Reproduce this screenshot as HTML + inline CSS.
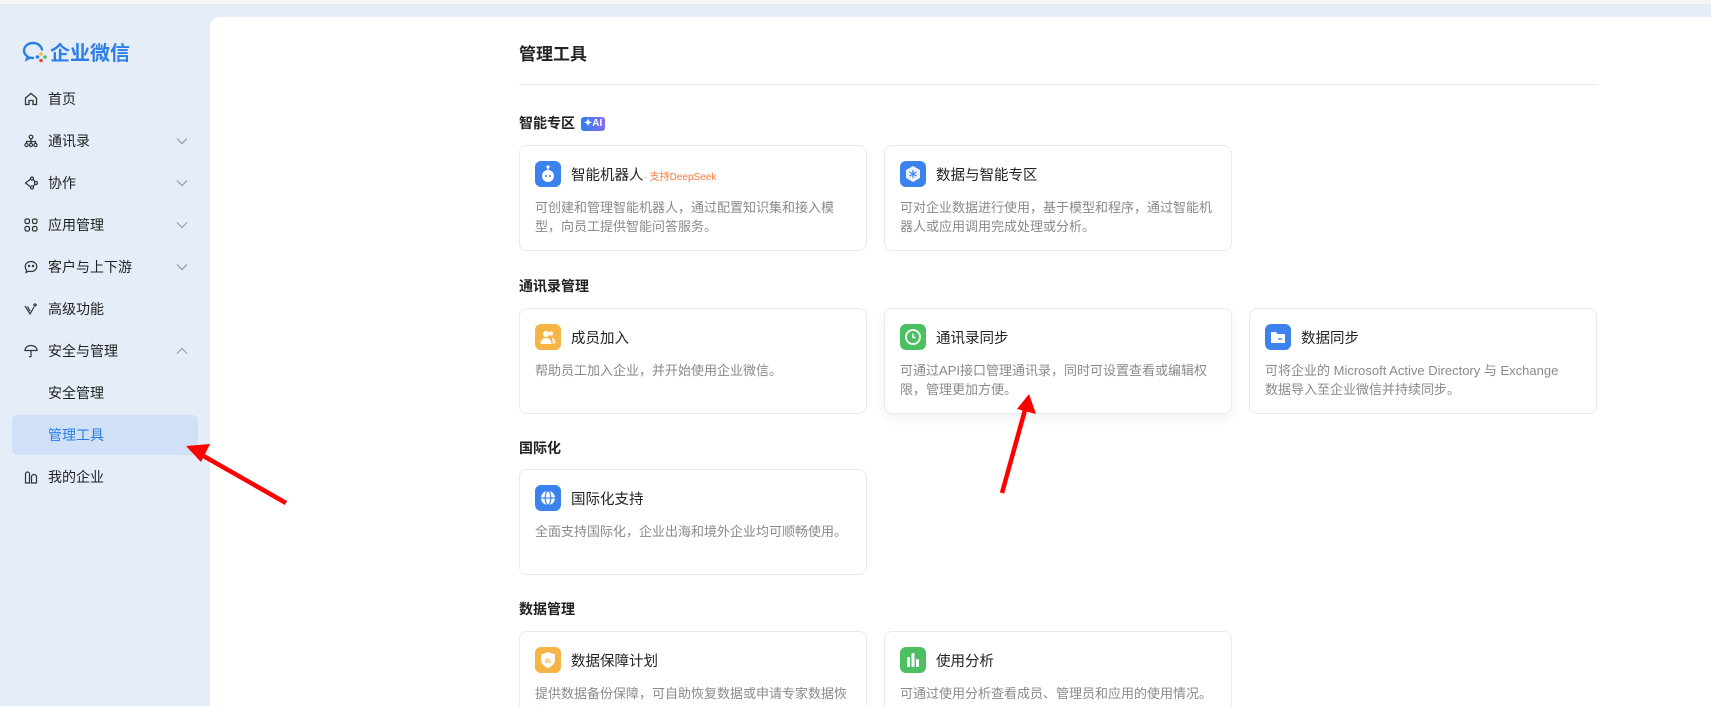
<!DOCTYPE html>
<html><head><meta charset="utf-8"><style>
*{margin:0;padding:0;box-sizing:border-box}
html{width:1711px;height:706px;overflow:hidden}
body{width:1711px;height:706px;overflow:hidden;background:#e5edf9;font-family:"Liberation Sans","Noto Sans CJK SC",sans-serif;position:relative;color:#222}
.top{position:absolute;left:0;top:0;width:1711px;height:5px;background:#f4f5f7;border-bottom:1px solid #e3e5e8}
.logo{position:absolute;left:22px;top:37px;display:flex;align-items:center;font-size:20px;font-weight:bold;color:#2c7ee8}
.mi{position:absolute;left:12px;width:186px;height:40px;display:flex;align-items:center;font-size:14px;color:#222}
.mi svg.ic{position:absolute;left:12px;top:13px}
.mi span{position:absolute;left:36px}
.mi .ch{position:absolute;left:164px;top:16px}
.mi.act{background:#cfe0f7;border-radius:6px;color:#2d7de6}
.main{position:absolute;left:210px;top:17px;width:1501px;height:689px;background:#fff;border-radius:10px 0 0 0;overflow:hidden}
.h1{position:absolute;left:519px;top:40px;font-size:17px;font-weight:bold}
.hr{position:absolute;left:519px;top:84px;width:1079px;height:1px;background:#e8e8e8}
.sec{position:absolute;left:519px;font-size:14px;font-weight:bold}
.card{position:absolute;width:348px;height:106px;border:1px solid #e9eaec;border-radius:8px;background:#fff}
.card .i{position:absolute;left:15px;top:15px;width:26px;height:26px;border-radius:6px}
.card .t{position:absolute;left:51px;top:18px;font-size:14.5px;color:#222}
.card .d{position:absolute;left:15px;top:52px;right:15px;font-size:13px;line-height:19px;color:#8a8a8a}
.ai{display:inline-block;font-size:10px;color:#fff;background:linear-gradient(90deg,#2b7ff0,#8a6cf2);border-radius:3px;padding:0 3px;line-height:14px;vertical-align:2px;margin-left:2px}
</style></head><body>
<div class="top"></div>
<div class="logo"><svg width="26" height="24" viewBox="0 0 26 24"><path d="M11 3C6 3 2 6.5 2 10.5c0 2.5 1.4 4.6 3.6 6l-.8 2.8 3.3-1.7c1 .3 1.9.4 2.9.4" fill="none" stroke="#2c7ee8" stroke-width="2.4" stroke-linecap="round"/><path d="M11 3c4.5 0 8.2 2.8 8.9 6.5" fill="none" stroke="#2c7ee8" stroke-width="2.4" stroke-linecap="round"/><circle cx="19" cy="14" r="1.8" fill="#f6b73c"/><circle cx="23" cy="17" r="1.8" fill="#4cc05e"/><circle cx="19" cy="20.5" r="1.8" fill="#e9463b"/><circle cx="15.5" cy="17" r="1.8" fill="#2c7ee8"/></svg><span style="margin-left:2px">企业微信</span></div>

<div class="mi" style="top:79px"><svg class="ic" width="14" height="14" viewBox="0 0 14 14" fill="none" stroke="#333" stroke-width="1.3"><path d="M1.5 6L7 1.5 12.5 6v6.5h-3.5V8.5h-4v4H1.5z"/></svg><span>首页</span></div>
<div class="mi" style="top:121px"><svg class="ic" width="14" height="14" viewBox="0 0 14 14" fill="none" stroke="#333" stroke-width="1.2"><circle cx="7" cy="3" r="1.8"/><circle cx="2.5" cy="11" r="1.6"/><circle cx="7" cy="11" r="1.6"/><circle cx="11.5" cy="11" r="1.6"/><path d="M2.5 9V7.5h9V9M7 5v4"/></svg><span>通讯录</span><svg class="ch" width="12" height="8" viewBox="0 0 12 8"><path d="M1 1.5l5 5 5-5" fill="none" stroke="#999" stroke-width="1.2"/></svg></div>
<div class="mi" style="top:163px"><svg class="ic" width="14" height="14" viewBox="0 0 14 14" fill="none" stroke="#333" stroke-width="1.2"><path d="M1.5 7L8 2l4 5-4 5z"/><circle cx="8" cy="2.5" r="1.5" fill="#e5edf9"/><circle cx="12" cy="7" r="1.5" fill="#e5edf9"/><circle cx="8" cy="11.5" r="1.5" fill="#e5edf9"/></svg><span>协作</span><svg class="ch" width="12" height="8" viewBox="0 0 12 8"><path d="M1 1.5l5 5 5-5" fill="none" stroke="#999" stroke-width="1.2"/></svg></div>
<div class="mi" style="top:205px"><svg class="ic" width="14" height="14" viewBox="0 0 14 14" fill="none" stroke="#333" stroke-width="1.2"><rect x="1" y="1" width="4.5" height="4.5" rx="1.5"/><rect x="8.5" y="1" width="4.5" height="4.5" rx="1.5"/><rect x="1" y="8.5" width="4.5" height="4.5" rx="1.5"/><rect x="8.5" y="8.5" width="4.5" height="4.5" rx="1.5"/></svg><span>应用管理</span><svg class="ch" width="12" height="8" viewBox="0 0 12 8"><path d="M1 1.5l5 5 5-5" fill="none" stroke="#999" stroke-width="1.2"/></svg></div>
<div class="mi" style="top:247px"><svg class="ic" width="14" height="14" viewBox="0 0 14 14" fill="none" stroke="#333" stroke-width="1.2"><path d="M7 1.5c3.2 0 5.8 2.2 5.8 5s-2.6 5-5.8 5c-.8 0-1.5-.1-2.2-.3L2 12.5l.6-2.4C1.6 9.1 1.2 7.9 1.2 6.5c0-2.8 2.6-5 5.8-5z"/><circle cx="5" cy="6" r=".6" fill="#333"/><circle cx="9" cy="6" r=".6" fill="#333"/></svg><span>客户与上下游</span><svg class="ch" width="12" height="8" viewBox="0 0 12 8"><path d="M1 1.5l5 5 5-5" fill="none" stroke="#999" stroke-width="1.2"/></svg></div>
<div class="mi" style="top:289px"><svg class="ic" width="14" height="14" viewBox="0 0 14 14" fill="none" stroke="#333" stroke-width="1.2"><path d="M1 4l5 8 4-7M3.5 4.5L6 9"/><path d="M11 1v4M9 3h4"/></svg><span>高级功能</span></div>
<div class="mi" style="top:331px"><svg class="ic" width="14" height="14" viewBox="0 0 14 14" fill="none" stroke="#333" stroke-width="1.2"><path d="M1 6.5C1 3.5 3.7 1.5 7 1.5s6 2 6 5zM7 6.5v5.5c0 1-1.5 1-1.5 0"/></svg><span>安全与管理</span><svg class="ch" width="12" height="8" viewBox="0 0 12 8"><path d="M1 6.5l5-5 5 5" fill="none" stroke="#999" stroke-width="1.2"/></svg></div>
<div class="mi" style="top:373px"><span>安全管理</span></div>
<div class="mi act" style="top:415px"><span>管理工具</span></div>
<div class="mi" style="top:457px"><svg class="ic" width="14" height="14" viewBox="0 0 14 14" fill="none" stroke="#333" stroke-width="1.2"><path d="M1.5 13V4a2 2 0 014 0v9zM7.5 13V7a2.5 2.5 0 015 0v6z"/></svg><span>我的企业</span></div>

<div class="main">
<div style="position:absolute;left:-210px;top:-17px;width:1711px;height:706px">
<div class="h1">管理工具</div>
<div class="hr"></div>

<div class="sec" style="top:113px">智能专区 <span class="ai">✦AI</span></div>
<div class="card" style="left:519px;top:145px"><div class="i" style="background:#3c82ef"><svg width="26" height="26"><circle cx="13" cy="15" r="6" fill="#fff"/><circle cx="13" cy="6" r="1.6" fill="#fff"/><path d="M13 7v2" stroke="#fff"/><circle cx="11" cy="15" r="1" fill="#3c82ef"/><circle cx="15" cy="15" r="1" fill="#3c82ef"/></svg></div><div class="t">智能机器人<span style="font-size:10px;color:#f07a3c">· 支持DeepSeek</span></div><div class="d">可创建和管理智能机器人，通过配置知识集和接入模型，向员工提供智能问答服务。</div></div>
<div class="card" style="left:884px;top:145px"><div class="i" style="background:#3c82ef"><svg width="26" height="26"><path d="M13 5l7 4v8l-7 4-7-4V9z" fill="#fff" opacity=".9"/><path d="M13 9v8M9.5 11l7 4M16.5 11l-7 4" stroke="#3c82ef" stroke-width="1.2"/></svg></div><div class="t">数据与智能专区</div><div class="d">可对企业数据进行使用，基于模型和程序，通过智能机器人或应用调用完成处理或分析。</div></div>

<div class="sec" style="top:276px">通讯录管理</div>
<div class="card" style="left:519px;top:308px"><div class="i" style="background:#f5b443"><svg width="26" height="26"><circle cx="11" cy="10" r="3" fill="#fff"/><path d="M5.5 20c0-4 2.5-6 5.5-6s5.5 2 5.5 6z" fill="#fff"/><circle cx="16" cy="9.5" r="2.3" fill="#fff" opacity=".8"/><path d="M17 13.5c2 .5 3.5 2.5 3.5 6h-3" fill="#fff" opacity=".8"/></svg></div><div class="t">成员加入</div><div class="d">帮助员工加入企业，并开始使用企业微信。</div></div>
<div class="card" style="left:884px;top:308px;box-shadow:0 4px 12px rgba(0,0,0,.06)"><div class="i" style="background:#4dbf63"><svg width="26" height="26"><circle cx="13" cy="13" r="7" fill="none" stroke="#fff" stroke-width="1.8"/><path d="M13 9.5v4h2.5" stroke="#fff" stroke-width="1.6" fill="none"/></svg></div><div class="t">通讯录同步</div><div class="d">可通过API接口管理通讯录，同时可设置查看或编辑权限，管理更加方便。</div></div>
<div class="card" style="left:1249px;top:308px"><div class="i" style="background:#3c82ef"><svg width="26" height="26"><path d="M6 8h5l1.5 2H20v9H6z" fill="#fff"/><path d="M13 15h4" stroke="#3c82ef" stroke-width="1.3"/></svg></div><div class="t">数据同步</div><div class="d">可将企业的 Microsoft Active Directory 与 Exchange<br>数据导入至企业微信并持续同步。</div></div>

<div class="sec" style="top:438px">国际化</div>
<div class="card" style="left:519px;top:469px"><div class="i" style="background:#3c82ef"><svg width="26" height="26"><circle cx="13" cy="13" r="7" fill="#fff"/><ellipse cx="13" cy="13" rx="2.8" ry="7" fill="none" stroke="#3c82ef" stroke-width="1.2"/><path d="M6 13h14" stroke="#3c82ef" stroke-width="1.2"/></svg></div><div class="t">国际化支持</div><div class="d">全面支持国际化，企业出海和境外企业均可顺畅使用。</div></div>

<div class="sec" style="top:599px">数据管理</div>
<div class="card" style="left:519px;top:631px"><div class="i" style="background:#f5b443"><svg width="26" height="26"><path d="M13 5l7 2.5v5c0 4-3 7-7 8.5-4-1.5-7-4.5-7-8.5v-5z" fill="#fff"/><path d="M11 12v4M13 11v5M15 13v3" stroke="#f5b443" stroke-width="1.2"/></svg></div><div class="t">数据保障计划</div><div class="d">提供数据备份保障，可自助恢复数据或申请专家数据恢复。</div></div>
<div class="card" style="left:884px;top:631px"><div class="i" style="background:#4dbf63"><svg width="26" height="26"><rect x="7" y="10" width="3" height="10" rx="1" fill="#fff"/><rect x="11.5" y="6" width="3" height="14" rx="1" fill="#fff"/><rect x="16" y="12" width="3" height="8" rx="1" fill="#fff"/></svg></div><div class="t">使用分析</div><div class="d">可通过使用分析查看成员、管理员和应用的使用情况。</div></div>
</div>
</div>

<svg style="position:absolute;left:0;top:0" width="1711" height="706">
<line x1="286" y1="503" x2="200" y2="454" stroke="#f00" stroke-width="4.5"/><polygon points="186,446 210,444 201,462" fill="#f00"/>
<line x1="1002" y1="493" x2="1025" y2="410" stroke="#f00" stroke-width="4.5"/><polygon points="1029,394 1036,414 1017,409" fill="#f00"/>
</svg>
</body></html>
